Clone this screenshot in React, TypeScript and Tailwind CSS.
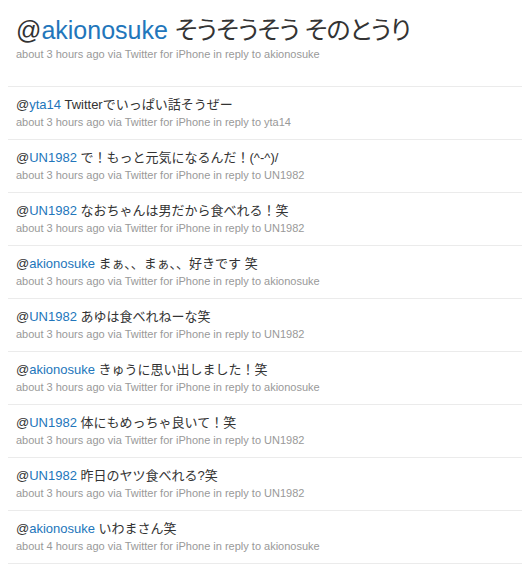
const replies = [
  { user: "yta14", text: "Twitterでいっぱい話そうぜー", time: "about 3 hours ago" },
  { user: "UN1982", text: "で！もっと元気になるんだ！(^-^)/", time: "about 3 hours ago" },
  { user: "UN1982", text: "なおちゃんは男だから食べれる！笑", time: "about 3 hours ago" },
  { user: "akionosuke", text: "まぁ、、まぁ、、好きです 笑", time: "about 3 hours ago" },
  { user: "UN1982", text: "あゆは食べれねーな笑", time: "about 3 hours ago" },
  { user: "akionosuke", text: "きゅうに思い出しました！笑", time: "about 3 hours ago" },
  { user: "UN1982", text: "体にもめっちゃ良いて！笑", time: "about 3 hours ago" },
  { user: "UN1982", text: "昨日のヤツ食べれる?笑", time: "about 3 hours ago" },
  { user: "akionosuke", text: "いわまさん笑", time: "about 4 hours ago" },
];

function Meta({ time, user }: { time: string; user: string }) {
  return (
    <p className="text-[11px] leading-[16px] text-[#999999]">
      {time} via Twitter for iPhone in reply to {user}
    </p>
  );
}

export default function App() {
  return (
    <div className="w-[522px] h-[564px] overflow-hidden bg-white text-[#333333] font-['Liberation_Sans','Noto_Sans_CJK_JP',sans-serif]">
      <div className="h-[86px] pl-4 pt-[14px]">
        <h1 className="text-[25px] leading-[32px] [font-feature-settings:'palt']">
          @<span className="text-[#2276bb]">akionosuke</span>{" "}
          <span className="tracking-[-1px]">そうそうそう そのとうり</span>
        </h1>
        <Meta time="about 3 hours ago" user="akionosuke" />
      </div>

      <div className="ml-2">
        {replies.map((r, i) => (
          <div key={i} className="border-t border-[#ebebeb] pl-2 pt-[9px] pb-[9px]">
            <p className="text-[13px] leading-[18px]">
              @<span className="text-[#2276bb]">{r.user}</span> {r.text}
            </p>
            <Meta time={r.time} user={r.user} />
          </div>
        ))}
        <div className="border-t border-[#ebebeb]" />
      </div>
    </div>
  );
}
